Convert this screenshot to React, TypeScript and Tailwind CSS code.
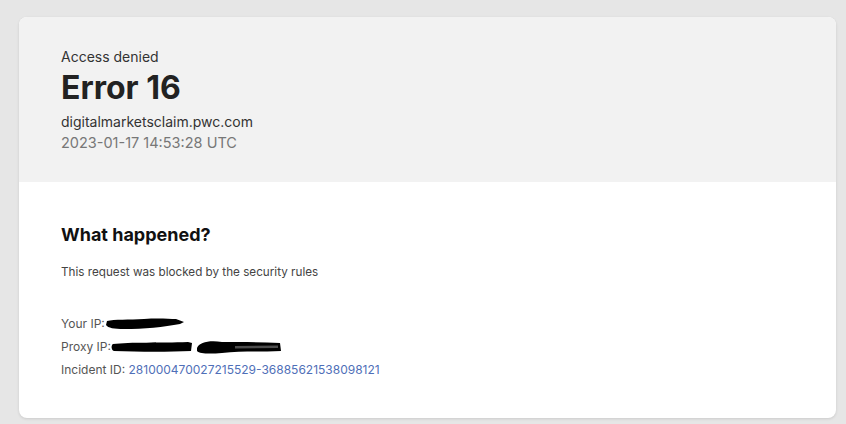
import React from "react";

export default function App() {
  return (
    <div className="min-h-[424px] w-[846px] bg-[#e6e6e6] pt-[17px] pl-[19px]" style={{ fontFamily: "Inter, 'Noto Sans', sans-serif" }}>
      <div className="w-[817px] h-[401px] rounded-lg overflow-hidden bg-white shadow-[0_1px_3px_rgba(0,0,0,0.12)] flex flex-col">
        <div className="bg-[#f2f2f2] h-[165px] pl-[42px] pt-[30px]">
          <div className="text-[14px] leading-[20px] text-[#333]">Access denied</div>
          <div className="text-[32px] leading-[38px] font-bold text-[#222] mt-[2px]">Error 16</div>
          <div className="text-[14px] leading-[20px] text-[#333] mt-[5px]">digitalmarketsclaim.pwc.com</div>
          <div className="text-[14.5px] leading-[20px] text-[#777] mt-[1px]">2023-01-17 14:53:28 UTC</div>
        </div>
        <div className="pl-[42px] pt-[41px]">
          <div className="text-[18px] leading-[24px] font-bold text-[#111]">What happened?</div>
          <div className="text-[11.7px] leading-[16px] text-[#444] mt-[17px]">This request was blocked by the security rules</div>
          <div className="mt-[36px] flex flex-col gap-[7px] text-[12px] leading-[16px] text-[#555]">
            <div className="flex items-center h-[16px]">
              <span>Your IP:</span>
              <svg width="80" height="14" viewBox="0 0 80 14" className="-ml-[1px]">
                <path d="M3 4 C10 2 25 3 40 2 C55 1 65 2 72 2 L80 5 L76 7 C60 10 40 12 20 12 C10 12 4 11 2 8 Z" fill="#000" />
              </svg>
            </div>
            <div className="flex items-center h-[16px]">
              <span>Proxy IP:</span>
              <svg width="175" height="16" viewBox="0 0 175 16" className="-ml-[1px]">
                <path d="M3 5 C20 3 50 4 78 3 L82 4 L81 12 C60 13 30 13 4 12 C1 11 1 6 3 5 Z" fill="#000" />
                <path d="M87 9 C89 3 100 1 112 3 C130 3 150 3 170 4 L171 12 C150 13 130 12 112 14 C100 15 90 15 87 12 Z" fill="#000" />
                <path d="M125 7 L168 6.5 L168 9 L125 9.5 Z" fill="#fff" opacity="0.3" />
              </svg>
            </div>
            <div className="h-[16px]">
              Incident ID: <span className="text-[#4f6fb8]">281000470027215529-36885621538098121</span>
            </div>
          </div>
        </div>
      </div>
    </div>
  );
}
